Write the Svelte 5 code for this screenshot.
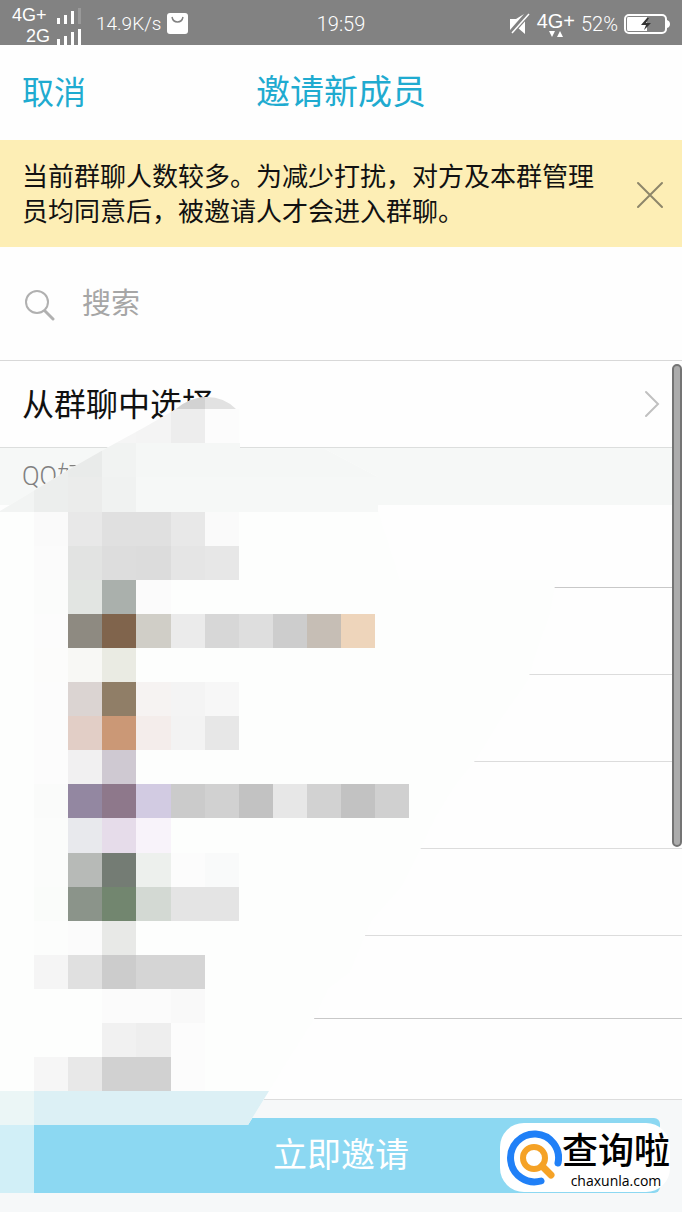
<script>
  let query = '';
  let showNotice = true;

  const contacts = [1, 2, 3, 4, 5, 6, 7];

  // mosaic grid: twenty square cells across the screen
  const cell = 682 / 20;

  // each band: grid row, first column, then one colour per cell
  const bands = [
    { row: 11, col: 5, colors: ['#d2d2d2', '#e2e2e2'] },
    { row: 12, col: 2, colors: ['#f5f5f5', '#f5f5f5', '#f4f4f4', '#ededed', '#fcfcfc'] },
    { row: 13, col: 0, colors: ['#eceeed', '#eceeed', '#e9ebea', '#f1f3f2', '#f5f7f6', '#f5f7f6', '#f5f7f6', '#f5f7f6', '#f5f7f6', '#f5f7f6', '#f5f7f6', '#f5f7f6'] },
    { row: 14, col: 0, colors: ['#f2f4f3', '#eceeed', '#ebeceb', '#f0f2f1', '#f6f8f7', '#f6f8f7', '#f6f8f7', '#f6f8f7', '#f6f8f7', '#f6f8f7', '#f6f8f7', '#f6f8f7'] },
    { row: 15, col: 1, colors: ['#fafafa', '#e8e8e8', '#e0e0e0', '#e0e0e0', '#e8e8e8', '#fafafa'] },
    { row: 16, col: 1, colors: ['#fbfbfb', '#e2e3e2', '#dddddd', '#dcdcdc', '#e5e5e5', '#e7e7e7'] },
    { row: 17, col: 1, colors: ['#fbfcfb', '#e2e5e2', '#aab0ac', '#fbfbfb'] },
    { row: 18, col: 1, colors: ['#fcfcfc', '#8e8a81', '#80644c', '#d0cec7', '#ebebeb', '#d7d7d7', '#dedede', '#cdcdcd', '#c6beb5', '#eed5bb'] },
    { row: 19, col: 1, colors: ['#fcfcfb', '#f8f8f5', '#eaebe3'] },
    { row: 20, col: 1, colors: ['#fcfcfc', '#dbd4d2', '#907e67', '#f6f3f2', '#f4f4f4', '#f7f7f7'] },
    { row: 21, col: 1, colors: ['#fcfcfc', '#e2cec6', '#cb9876', '#f4edeb', '#f3f3f3', '#e7e7e7'] },
    { row: 22, col: 1, colors: ['#fcfcfc', '#f1f0f1', '#cfc9d2'] },
    { row: 23, col: 1, colors: ['#fafbfa', '#9387a1', '#8e788b', '#d2cbe2', '#cbcbcb', '#d1d1d1', '#c2c2c2', '#e7e7e7', '#d2d2d2', '#c2c2c2', '#d0d0d0'] },
    { row: 24, col: 1, colors: ['#fbfcfb', '#e8e9ed', '#e6dcea', '#f8f3fa'] },
    { row: 25, col: 1, colors: ['#fbfcfb', '#b7bab7', '#747c74', '#edf0ed', '#fcfcfc', '#f9fafa'] },
    { row: 26, col: 1, colors: ['#fafcfa', '#8b948a', '#72866f', '#d3d9d3', '#e4e4e4', '#e4e4e4'] },
    { row: 27, col: 1, colors: ['#fcfdfc', '#fbfbfb', '#e8e9e7'] },
    { row: 28, col: 1, colors: ['#f5f5f5', '#e0e0e0', '#cccccc', '#d5d5d5', '#d5d5d5'] },
    { row: 29, col: 3, colors: ['#fbfbfb', '#fbfbfb', '#f9f9f9'] },
    { row: 30, col: 3, colors: ['#f1f1f1', '#eeeeee', '#fcfcfc'] },
    { row: 31, col: 1, colors: ['#f6f6f6', '#e8e8e8', '#d1d1d1', '#d1d1d1', '#fcfcfc'] },
    { row: 32, col: 0, colors: ['#ebf6f6', '#dcf0f5', '#dcf0f5', '#dcf0f5', '#dcf0f5', '#dcf0f5', '#dcf0f5', '#dcf0f5'] },
    { row: 33, col: 0, colors: ['#d1eff7'] },
    { row: 34, col: 0, colors: ['#d1eff7'] }
  ];
</script>

<div class="screen">
  <div class="status">
    <div class="status-side">
      <div class="signals">
        <div class="signal first">
          <span>4G+</span>
          <svg width="26" height="16" viewBox="0 0 26 16">
            <path d="M1 10h3v6H1zM8 7h3v9H8zM15 3h3v13h-3z" fill="#fff" />
            <path d="M22 0h3v16h-3z" fill="#999" />
          </svg>
        </div>
        <div class="signal">
          <span>2G</span>
          <svg width="26" height="16" viewBox="0 0 26 16">
            <path d="M1 10h3v6H1zM8 7h3v9H8zM15 3h3v13h-3zM22 0h3v16h-3z" fill="#fff" />
          </svg>
        </div>
      </div>
      <span class="speed">14.9K/s</span>
      <svg width="21" height="21" viewBox="0 0 21 21">
        <rect width="21" height="21" rx="3" fill="#fff" />
        <path d="M5 4q1 5 5.500 5T16 4" fill="none" stroke="#828282" stroke-width="1.500" />
      </svg>
    </div>
    <span class="clock">19:59</span>
    <div class="status-side right">
      <svg width="22" height="22" viewBox="0 0 22 22">
        <path d="M1 6h6l8-5L1 17zM16 5v16l-7-6z" fill="#fff" />
        <path d="M20 1 3 20" stroke="#828282" stroke-width="4" />
        <path d="M20 1 3 20" stroke="#fff" stroke-width="1.500" />
      </svg>
      <div class="network">
        <span>4G+</span>
        <svg width="16" height="6" viewBox="0 0 16 6">
          <path d="M1 0h6L4 6zM9 6h6l-3-6z" fill="#fff" />
        </svg>
      </div>
      <span class="percent">52%</span>
      <svg width="46" height="20" viewBox="0 0 46 20">
        <rect x="1" y="1" width="41" height="18" rx="4" fill="none" stroke="#fff" stroke-width="2" />
        <path d="M4 3h19v14H4q-1 0-1-2V5q0-2 1-2zM43 6q3 1 3 4t-3 4z" fill="#fff" />
        <path d="m23 4-6 7h5l-2 5 7-7h-5l3-5z" fill="#333" />
      </svg>
    </div>
  </div>

  <header class="nav">
    <button class="cancel">取消</button>
    <h1>邀请新成员</h1>
  </header>

  {#if showNotice}
    <div class="notice">
      <p>当前群聊人数较多。为减少打扰，对方及本群管理员均同意后，被邀请人才会进入群聊。</p>
      <button class="close" aria-label="关闭" on:click={() => (showNotice = false)}>
        <svg width="28" height="28" viewBox="0 0 28 28">
          <path d="M2 2l24 24M26 2 2 26" stroke="#8d866a" stroke-width="2" stroke-linecap="round" />
        </svg>
      </button>
    </div>
  {/if}

  <label class="search">
    <svg width="32" height="32" viewBox="0 0 32 32" fill="none" stroke="#b0b0b0" stroke-linecap="round">
      <circle cx="13" cy="13" r="11" stroke-width="2" />
      <path d="m21 22 8 8" stroke-width="3" />
    </svg>
    <input type="text" placeholder="搜索" aria-label="搜索" bind:value={query} />
  </label>

  <div class="list">
    <button class="group-row">
      <span>从群聊中选择</span>
      <svg width="16" height="28" viewBox="0 0 16 28">
        <path d="m2 2 12 12L2 26" fill="none" stroke="#c0c0c0" stroke-width="2" stroke-linecap="round" />
      </svg>
    </button>
    <h2>QQ好友</h2>
    <ul>
      {#each contacts as contact (contact)}
        <li></li>
      {/each}
    </ul>
    <div class="scrollbar"></div>
  </div>

  <footer>
    <button class="invite">立即邀请</button>
    <div class="brand">
      <svg width="56" height="56" viewBox="0 0 56 56" fill="none" stroke-linecap="round">
        <path d="M35 51A24 24 0 1 1 52 33" stroke="#2080f7" stroke-width="7" />
        <circle cx="28" cy="28" r="11" stroke="#f5a226" stroke-width="6" />
        <path d="m36 36 9 9" stroke="#f5a226" stroke-width="7" />
      </svg>
      <div class="brand-text">
        <strong>查询啦</strong>
        <span>chaxunla.com</span>
      </div>
    </div>
  </footer>

  <!-- hides the names and avatars of the contacts -->
  <svg class="mosaic" viewBox="0 0 682 1212" aria-hidden="true">
    <defs>
      <clipPath id="brush">
        <path
          d="M0 511 68 470 103 450 145 427 176 409Q190 397 207 397 224 397 236 409H240V449H325L378 477V511L400 580H556L550 613 538 648 527 682 500 720 482 750 474 762 456 784 435 818 419 852 402 886 372 920 364 938 350 972 328 989 313 1021 290 1057 269 1091 248 1125H34V1193H0Z"
        />
      </clipPath>
    </defs>
    <g clip-path="url(#brush)" shape-rendering="crispEdges">
      <rect y="390" width="682" height="822" fill="#fdfefd" />
      {#each bands as band (band.row)}
        {#each band.colors as color, i}
          <rect
            x={(band.col + i) * cell}
            y={band.row * cell}
            width={cell}
            height={cell}
            fill={color}
          />
        {/each}
      {/each}
    </g>
  </svg>
</div>

<style>
  :global(body) {
    margin: 0;
    background: #fefefe;
  }

  .screen {
    position: relative;
    font-family: 'Liberation Sans', 'Noto Sans CJK SC', sans-serif;
    color: #111;
    background: #fefefe;
  }

  button {
    border: 0;
    padding: 0;
    background: none;
    font: inherit;
    color: inherit;
    cursor: pointer;
  }

  svg {
    display: block;
    flex: none;
  }

  .status {
    display: grid;
    grid-template-columns: 1fr auto 1fr;
    align-items: center;
    height: 45px;
    padding: 0 12px;
    background: #828282;
    color: #fff;
    font-family: Roboto, sans-serif;
    font-size: 20px;
    font-weight: 300;
  }

  .status-side {
    display: flex;
    align-items: center;
    gap: 6px;
  }

  .status-side.right {
    justify-content: flex-end;
  }

  .signals {
    display: flex;
    flex-direction: column;
    width: 70px;
    padding-top: 5px;
    font-family: 'Liberation Sans', sans-serif;
    font-size: 18px;
    font-weight: 400;
    line-height: 21px;
  }

  .signal {
    display: flex;
    align-items: center;
    justify-content: flex-end;
    gap: 6px;
  }

  .signal.first {
    justify-content: space-between;
  }

  .speed {
    margin-left: 8px;
    font-size: 19px;
  }

  .network {
    display: flex;
    flex-direction: column;
    align-items: center;
    font-family: 'Liberation Sans', sans-serif;
    font-weight: 400;
    line-height: 20px;
  }

  .nav {
    display: flex;
    align-items: center;
    justify-content: center;
    position: relative;
    box-sizing: border-box;
    height: 95px;
    padding: 0 22px 6px;
    color: #1fabd0;
  }

  .cancel {
    position: absolute;
    left: 22px;
    font-size: 32px;
  }

  h1 {
    margin: 0;
    font-size: 34px;
    font-weight: 400;
  }

  .notice {
    display: flex;
    align-items: center;
    justify-content: space-between;
    padding: 20px 18px 17px 22px;
    background: #fdeeb5;
  }

  .notice p {
    flex: 1;
    max-width: 590px;
    margin: 0;
    font-size: 26px;
    line-height: 35px;
  }

  .search {
    display: flex;
    align-items: center;
    gap: 26px;
    box-sizing: border-box;
    height: 113px;
    padding: 2px 24px 0;
  }

  .search input {
    flex: 1;
    min-width: 0;
    border: 0;
    padding: 0;
    outline: 0;
    background: none;
    font: inherit;
    font-size: 29px;
  }

  .search input::placeholder {
    color: #a6a6a6;
    opacity: 1;
  }

  .list {
    position: relative;
    border-top: 1px solid #d8d8d8;
  }

  .group-row {
    display: flex;
    align-items: center;
    justify-content: space-between;
    width: 100%;
    height: 86px;
    padding: 0 22px;
    font-size: 32px;
  }

  .group-row span {
    padding-bottom: 4px;
  }

  h2 {
    margin: 0;
    padding-left: 22px;
    border-top: 1px solid #dcdedd;
    background: #f6f8f7;
    color: #808080;
    font-family: Roboto, 'Noto Sans CJK SC', sans-serif;
    font-size: 26px;
    font-weight: 300;
    line-height: 57px;
  }

  ul {
    margin: 0;
    padding: 0;
    list-style: none;
  }

  li {
    box-sizing: border-box;
    height: 87px;
    border-bottom: 1px solid #dcdcdc;
  }

  li:first-child,
  li:nth-child(6) {
    height: 83px;
    border-color: #c8c8c8;
  }

  li:last-child {
    height: 81px;
  }

  .scrollbar {
    position: absolute;
    top: 3px;
    right: 0;
    box-sizing: border-box;
    width: 10px;
    height: 483px;
    border: 2px solid #747474;
    border-radius: 5px;
    background: #acacac;
  }

  footer {
    position: relative;
    padding: 18px 22px 19px;
    background: #f6f8f9;
  }

  .invite {
    display: block;
    width: 100%;
    height: 75px;
    padding-bottom: 6px;
    border-radius: 6px;
    background: #8cd8f2;
    color: #fff;
    font-size: 34px;
  }

  /* sits over the right end of the invite button */
  .brand {
    position: absolute;
    right: 12px;
    bottom: 20px;
    z-index: 2;
    display: flex;
    align-items: center;
    box-sizing: border-box;
    height: 69px;
    padding-left: 6px;
    border-radius: 24px;
    background: #fff;
    color: #000;
  }

  .brand-text {
    display: flex;
    flex-direction: column;
    align-items: center;
    padding-top: 4px;
  }

  .brand-text strong {
    font-size: 36px;
    font-weight: 500;
    line-height: 42px;
  }

  .brand-text span {
    font-family: 'Open Sans', sans-serif;
    font-size: 14px;
    font-weight: 500;
    line-height: 16px;
  }

  .mosaic {
    position: absolute;
    top: 0;
    left: 0;
    width: 100%;
    pointer-events: none;
  }
</style>
